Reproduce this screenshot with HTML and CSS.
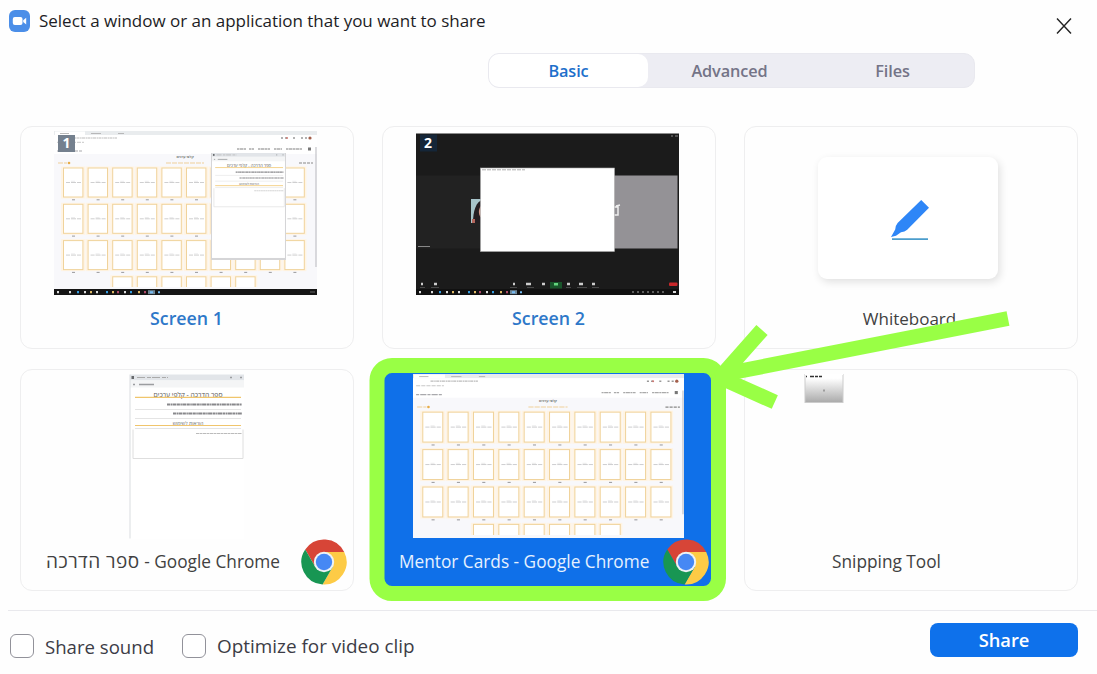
FILE: index.html
```html
<!DOCTYPE html>
<html lang="en">
<head>
<meta charset="utf-8">
<title>Select a window</title>
<link rel="stylesheet" href="styles.css">
</head>
<body>
<svg class="defs" width="0" height="0" aria-hidden="true">
  <defs>
    <g id="tile">
      <rect x="-2" y="-1" width="24" height="32" fill="#fff4e4"/>
      <rect x=".5" y=".5" width="19.4" height="29" fill="#fff" stroke="#f0d39c"/>
      <path d="M3 15h4m1 0h5m1 0h4" stroke="#c9c9cb" stroke-width=".9"/>
      <path d="M8 13.8h4" stroke="#dededf" stroke-width=".6"/>
      <path d="M9 32.3h3" stroke="#9a9a9d" stroke-width="1"/>
    </g>
    <g id="tile-six">
      <use href="#tile" x="49.2"/><use href="#tile" x="73.8"/><use href="#tile" x="98.4"/><use href="#tile" x="123"/><use href="#tile" x="147.6"/><use href="#tile" x="172.2"/>
    </g>
    <g id="tile-row">
      <use href="#tile"/><use href="#tile" x="24.6"/><use href="#tile-six"/><use href="#tile" x="196.8"/><use href="#tile" x="221.4"/>
    </g>
    <g id="cards-page">
      <rect width="263" height="158" fill="#fff"/>
      <rect width="263" height="4" fill="#e9ecee"/>
      <rect x="1" y=".5" width="30" height="3.5" fill="#fff"/>
      <path d="M6 2.5h9m22 0h10m17 0h6" stroke="#aaa" stroke-width=".8"/>
      <path d="M17 7h46" stroke="#bbb" stroke-width="1.2" stroke-dasharray="3 .6 1.5 .4"/>
      <path d="M3 11.3h27" stroke="#c8c8c8" stroke-dasharray="4 1"/>
      <path d="M3 20h25" stroke="#a9a9ad" stroke-width="1.2" stroke-dasharray="3 1 6 1"/>
      <path d="M227 7h7m5 0h4m4 0h8" stroke="#999" stroke-width="1.4" stroke-dasharray="2 2"/>
      <circle cx="256" cy="7" r="1.6" fill="#a4604c"/><circle cx="233" cy="7" r="1" fill="#ce7771"/>
      <path d="M183 18h9m3 0h5m4 0h12m4 0h8m4 0h16" stroke="#aaa" stroke-width="1.3" stroke-dasharray="2 .5 4 .5"/>
      <rect x="254" y="16.5" width="3" height="3" fill="#777"/>
      <rect y="23" width="263" height="135" fill="#f8f8fb"/>
      <text x="131" y="27" font-size="3.6" font-weight="600" text-anchor="middle" fill="#555">קלפי ערכים</text>
      <path d="M4 32h9m99 0h38" stroke="#efcf99" stroke-dasharray="5 1"/>
      <circle cx="15" cy="32" r="1.3" fill="#e7ac48"/>
      <path d="M245 32h14" stroke="#888" stroke-width="1.2" stroke-dasharray="3 1"/>
      <use href="#tile-row" x="9" y="36.5"/><use href="#tile-row" x="9" y="72.8"/><use href="#tile-row" x="9" y="109.1"/>
      <svg width="263" height="156"><use href="#tile-six" x="9" y="145.3"/></svg>
      <path d="M262 16v120" stroke="#c4c4c9" stroke-width="1.2"/>
    </g>
    <g id="book-window">
      <rect width="114" height="164" fill="#fff"/>
      <rect width="114" height="6" fill="#e2e5e9"/>
      <rect y="6" width="114" height="7" fill="#f4f5f6"/>
      <path d="M7 3h31" stroke="#aaa" stroke-dasharray="8 2 4 1"/>
      <rect x="1.5" y="1.5" width="2.5" height="3" fill="#66696c"/>
      <path d="M100 3h2m8 0h2M9 10h15M3 10h2" stroke="#9b9da0" stroke-width="1.3"/>
      <text x="58" y="22" font-size="6.8" text-anchor="middle" fill="#555">ספר הדרכה - קלפי ערכים</text>
      <path d="M5 22.8h106M5 51h106" stroke="#f0c56c" stroke-width="1.2"/>
      <path d="M37 30h75M43 39h69" stroke="#88888b" stroke-width="1.8" stroke-dasharray="3 .5 1.5 .4 4 .5"/>
      <path d="M5 35h106M5 44h106M5 54h106" stroke="#ddd" stroke-width=".8"/>
      <text x="58" y="50" font-size="5" text-anchor="middle" fill="#666">הוראות לשימוש</text>
      <path d="M66 59h46" stroke="#bbb" stroke-dasharray="3 .5"/>
      <path d="M3 55v29h110V55" fill="none" stroke="#dedede"/>
    </g>
    <g id="taskbar-icons">
      <path d="M3 0h2m10 0h2m13 0h2m10 0h2m26 0h2m23 0h2" stroke="#ddd" stroke-width="2.2"/>
      <path d="M23 0h2m27 0h2m22 0h2" stroke="#359ce0" stroke-width="2.2"/>
      <path d="M36 0h2m20 0h2m24 0h2" stroke="#e0b965" stroke-width="2.2"/>
      <path d="M63 0h2m25 0h2" stroke="#ae4a68" stroke-width="2.2"/>
      <path d="M94 0h7" stroke="#6e8697" stroke-width="4"/>
      <path d="M96 0h3m5 0h2" stroke="#75bcf5" stroke-width="2"/>
    </g>
    <g id="chrome">
      <path d="M0-10H20.2A22.5 22.5 0 0 0-18.76-12.5L-8.66 5 0 0Z" fill="#d74537"/>
      <path d="M0-10H20.2A22.5 22.5 0 0 1-1.44 22.5L8.66 5 0 0Z" fill="#fdcb46"/>
      <path d="M-18.76-12.5A22.5 22.5 0 0 0-1.44 22.5L8.66 5 0 0-8.66 5Z" fill="#189653"/>
      <circle r="10.2" fill="#eef2f5"/><circle r="8.2" fill="#4688f4"/>
    </g>
    <linearGradient id="snip-fade" x2="0" y2="1"><stop offset=".15" stop-color="#fff"/><stop offset="1" stop-color="#aaa"/></linearGradient>
  </defs>
</svg>

<div class="dialog">
  <header class="titlebar">
    <svg class="app-icon" width="21" height="22" viewBox="0 0 21 22"><rect width="21" height="22" rx="6" fill="#4b8ee8"/><rect x="3.8" y="7" width="9.7" height="8" rx="2" fill="#fff"/><path d="M14.2 10.2 17.2 7.8V14.4L14.2 12Z" fill="#fff"/></svg>
    <h1 class="title">Select a window or an application that you want to share</h1>
    <button class="close" aria-label="Close"><svg width="16" height="18" viewBox="0 0 16 18"><path d="M1 1.5 15 16.5M15 1.5 1 16.5" stroke="#222" stroke-width="1.4"/></svg></button>
  </header>
  <nav class="tabs">
    <button class="tab active">Basic</button><button class="tab">Advanced</button><button class="tab">Files</button>
  </nav>
  <main class="grid">
    <section class="card">
      <svg class="thumb" width="263" height="164" viewBox="0 0 263 164">
        <use href="#cards-page"/>
        <rect x="4" y="4" width="17" height="17" fill="#74808e"/><text x="12.5" y="17" class="badge-text">1</text>
        <rect x="157" y="22" width="75" height="107" fill="#d5d5d7"/>
        <g transform="translate(158 22) scale(.64)"><use href="#book-window"/></g>
        <rect y="158" width="263" height="6" fill="#151515"/>
        <use href="#taskbar-icons" y="161.2"/><path d="M256 161h5" stroke="#666"/>
      </svg>
      <div class="label strong">Screen 1</div>
    </section>
    <section class="card">
      <svg class="thumb" width="263" height="164" viewBox="0 0 263 164">
        <rect y="2.5" width="263" height="161.5" fill="#1b1b1b"/>
        <rect x="0" y="44.5" width="130" height="73" fill="#222"/>
        <rect x="198" y="44.5" width="63.5" height="73" fill="#949296"/>
        <rect x="4" y="3.5" width="17" height="17" fill="#152638"/><text x="12" y="16.5" class="badge-text">2</text>
        <rect x="55" y="68" width="12" height="24" fill="#a7c4ca"/><path d="M67 69c-7 1-10 11-10 23h10z" fill="#241e22"/><path d="M67 73c-6 4-5 13 0 15z" fill="#d39a8b"/><path d="M56 88h3v4h-3z" fill="#b4665c"/>
        <path d="M197 76h5v8h-5m3-9 4-1" stroke="#eee" stroke-width="1.5" fill="none"/>
        <rect x="64.5" y="37" width="134" height="83.5" fill="#fff" stroke="#aaa" stroke-width=".6"/>
        <path d="M66 38.8h43" stroke="#999" stroke-width=".8" stroke-dasharray="4 1"/>
        <path d="M2 115.5h12M255 5h2m2 0h3" stroke="#888"/>
        <path d="M5 153h2m11 0h3m76 0h2m11 0h5m11 0h3m22 0h3m9 0h4m9 0h3" stroke="#ccc" stroke-width="2.4"/>
        <path d="M4 156.5h5m6 0h8m71 0h7m10 0h7m32 0h5m6 0h10m5 0h7" stroke="#555" stroke-width=".8"/>
        <rect x="134" y="151" width="12" height="6.5" fill="#19552b"/><rect x="138" y="152" width="4" height="2.5" fill="#64d67e"/>
        <rect x="253" y="151.5" width="8.5" height="3.5" rx="1" fill="#c9282b"/>
        <rect y="158" width="263" height="6" fill="#111"/><use href="#taskbar-icons" y="161.2"/>
        <path d="M216 161h35" stroke="#777" stroke-width="1.4" stroke-dasharray="2 3"/><path d="M257 161h3" stroke="#ddd" stroke-width="2"/>
      </svg>
      <div class="label strong">Screen 2</div>
    </section>
    <section class="card">
      <div class="board">
        <svg width="40" height="42" viewBox="0 0 40 42"><path d="M31.2 0 39 7.8 17.2 29.8Q14.8 32 11 32.2L6 35.8 1 37 5.2 29.6Q5.7 25 7.6 23Z" fill="#2e86f7"/><path d="M2 39.2h36" stroke="#4b9dcc" stroke-width="1.8"/></svg>
      </div>
      <div class="label whiteboard">Whiteboard</div>
    </section>
    <section class="card">
      <svg class="thumb" width="263" height="168" viewBox="0 0 263 168">
        <g transform="translate(76 .5)"><use href="#book-window"/><path d="M0 0V164" stroke="#dadde0" stroke-width="1"/></g>
      </svg>
      <div class="label with-icon book"><bdi class="hebrew">ספר הדרכה</bdi> - Google Chrome</div>
      <svg class="chrome" width="46" height="46" viewBox="-23 -23 46 46"><use href="#chrome"/></svg>
    </section>
    <section class="card selected">
      <svg class="thumb" width="271" height="164" viewBox="0 0 263 159" preserveAspectRatio="none"><rect width="263" height="159" fill="#f8f8fb"/><use href="#cards-page"/></svg>
      <div class="label with-icon">Mentor Cards - Google Chrome</div>
      <svg class="chrome" width="46" height="46" viewBox="-23 -23 46 46"><use href="#chrome"/></svg>
    </section>
    <section class="card">
      <svg class="thumb snip" width="263" height="164" viewBox="0 0 263 164"><rect x="27" y="0" width="38" height="28.5" fill="url(#snip-fade)" stroke="#ccc"/><path d="M27 0h38" stroke="#fff" stroke-width="2"/><path d="M28 2.5h1m3 0h4m1 0h3m1 0h3" stroke="#333" stroke-width="1.4"/><path d="M46 15.5v2" stroke="#666"/></svg>
      <div class="label snipping">Snipping Tool</div>
    </section>
  </main>
  <footer class="footer">
    <label class="check"><span class="box"></span><span>Share sound</span></label>
    <label class="check second"><span class="box"></span><span>Optimize for video clip</span></label>
    <button class="share">Share</button>
  </footer>
  <svg class="annotation" width="1097" height="674" viewBox="0 0 1097 674">
    <g fill="none" stroke="#99ff45" stroke-width="15">
      <rect x="377" y="365.5" width="341.5" height="228" rx="15"/>
      <path stroke-linejoin="bevel" d="M1008 318.5 722 374.5M762 330 720 377.5 774.8 402"/>
    </g>
  </svg>
</div>
</body>
</html>
```
FILE: styles.css
```css
* { box-sizing: border-box; }
body { margin: 0; background: #fefefe; font-family: "Open Sans", "Noto Sans", "DejaVu Sans", sans-serif; color: #414141; }
button { font: inherit; border: 0; padding: 0; background: none; }
.defs { position: absolute; }
.dialog { position: relative; width: 1097px; height: 674px; overflow: hidden; display: flex; flex-direction: column; }
.titlebar { display: flex; align-items: flex-start; height: 53px; padding: 10px 25px 0 9px; }
.title { flex: 1; margin: -1px 0 0 9px; font-size: 17px; line-height: 24px; letter-spacing: -.02px; font-weight: 400; color: #1d1d25; white-space: nowrap; }
.close { display: flex; margin-top: 7px; }
.tabs { display: grid; grid-template-columns: 159px 163px 163px; width: 487px; height: 35px; margin-left: 488px; background: #ededf3; border: 1px solid #e9e9ef; border-radius: 11px; }
.tab { font-size: 16.3px; font-weight: 600; color: #747487; letter-spacing: -.1px; border-radius: 10px; }
.tab.active { background: #fff; color: #1d6fcb; }
.grid { display: grid; grid-template-columns: repeat(3, 334px); grid-template-rows: 223px 222px; gap: 20px 28px; margin: 38px 0 0 20px; }
.card { position: relative; display: flex; flex-direction: column; align-items: center; border: 1px solid #eeeeef; border-radius: 12px; background: #fefefe; padding-top: 4px; }
.thumb { display: block; flex: none; margin-right: 4px; }
.badge-text { font: 700 14px "Open Sans", sans-serif; fill: #fff; text-anchor: middle; }
.label { margin-top: auto; height: 24px; margin-bottom: 16px; font-size: 17.25px; line-height: 24px; white-space: nowrap; }
.strong { font-size: 17.8px; font-weight: 600; color: #2e78c9; margin-right: 1px; margin-bottom: 18px; }
.whiteboard { font-size: 17px; margin-right: 3px; margin-bottom: 17px; }
.with-icon { align-self: flex-start; margin-left: 25px; }
.book { margin-bottom: 17px; }
.hebrew { font-size: 19px; letter-spacing: .5px; }
.snipping { margin-right: 49px; }
.chrome { position: absolute; right: 6px; bottom: 5px; }
.selected { background: #0f70e9; border-color: #0f70e9; color: #e5f1ff; }
.selected .thumb { margin-right: 2px; }
.selected .with-icon { margin-left: 16px; }
.board { display: flex; align-items: center; justify-content: center; width: 180px; height: 122px; margin: 26px 0 0 -6px; padding: 6px 0 0 3px; background: #fff; border-radius: 9px; box-shadow: 2px 3px 9px rgba(0, 0, 0, .12); }
.footer { display: flex; align-items: flex-start; flex: 1; margin: 19px 0 0 8px; padding: 12px 19px 0 2px; border-top: 1px solid #e9e9ed; }
.check { display: flex; align-items: center; gap: 11px; height: 24px; margin-top: 11px; font-size: 18.6px; color: #3c3c46; white-space: nowrap; }
.box { width: 24px; height: 24px; border: 1.5px solid #92929a; border-radius: 6px; background: #fff; }
.second { margin-left: 28px; font-size: 18.9px; }
.share { width: 148px; height: 34px; margin-left: auto; border-radius: 8px; background: #0e71eb; color: #fff; font-size: 18.3px; line-height: 33px; padding-bottom: 1px; font-weight: 600; }
.annotation { position: absolute; inset: 0; pointer-events: none; }
```
